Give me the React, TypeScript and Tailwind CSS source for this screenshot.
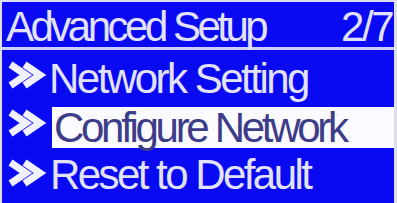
import React from "react";

function Chevrons({ className = "" }: { className?: string }) {
  return (
    <svg width="38" height="28" viewBox="0 0 38 28" className={`shrink-0 overflow-visible ${className}`}>
      <polyline points="3.5,3.5 19,14 3.5,24.5" fill="none" stroke="#f0f0ff" strokeWidth="7" strokeLinejoin="miter" />
      <polyline points="17.5,3.5 33,14 17.5,24.5" fill="none" stroke="#f0f0ff" strokeWidth="7" strokeLinejoin="miter" />
    </svg>
  );
}

export default function App() {
  const font = { fontFamily: '"Liberation Sans", Arial, sans-serif' };
  return (
    <div
      className="w-[397px] h-[203px] overflow-hidden bg-[#0a0af2] border-t-2 border-l-2 border-r-[3px] border-[#dedeec] flex flex-col text-[42px] leading-[42px] text-[#e2e2ff]"
      style={font}
    >
      <div className="h-[48px] shrink-0 flex justify-between items-start pt-[4px] pl-[4px] pr-[2px] border-b-[3px] border-[#cfcfff]">
        <span className="tracking-[-3.5px]">Advanced Setup</span>
        <span className="tracking-[-2.5px]">2/7</span>
      </div>
      <div className="h-[57px] shrink-0 flex items-start">
        <Chevrons className="ml-[5px] mt-[11px]" />
        <span className="ml-[4px] mt-[8px] whitespace-nowrap tracking-[-2.5px]">Network Setting</span>
      </div>
      <div className="h-[41px] shrink-0 flex items-start">
        <Chevrons className="ml-[5px] mt-[2px]" />
        <div className="ml-[7px] flex-1 h-[41px] bg-[#fafaff] text-[#3c3c88] pl-[2px] leading-[41px] whitespace-nowrap tracking-[-3.3px]">
          Configure Network
        </div>
      </div>
      <div className="flex-1 flex items-start">
        <Chevrons className="ml-[5px] mt-[11px]" />
        <span className="ml-[5px] mt-[6px] whitespace-nowrap tracking-[-2.55px]">Reset to Default</span>
      </div>
    </div>
  );
}
